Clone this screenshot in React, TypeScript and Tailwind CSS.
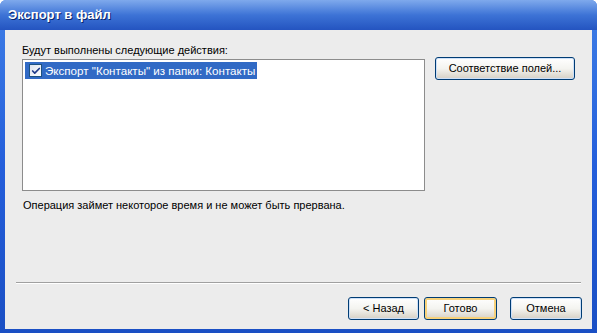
import { Check } from "lucide-react";

function XpButton({
  label,
  className = "",
  focused = false,
}: {
  label: string;
  className?: string;
  focused?: boolean;
}) {
  return (
    <button
      className={`flex h-[23px] items-center justify-center rounded-[3px] border border-[#003c74] bg-gradient-to-b from-white via-[#f4f4f0] to-[#d6d0c5] text-[11px] text-black ${
        focused ? "shadow-[inset_0_0_0_2px_#f7d27b]" : "shadow-[inset_0_0_0_1px_#cde0f8]"
      } ${className}`}
    >
      {label}
    </button>
  );
}

export default function App() {
  return (
    <div className="flex h-[333px] w-[599px] bg-white font-['Liberation_Sans',sans-serif]">
      <div className="flex w-[597px] flex-col rounded-t-[6px] bg-gradient-to-b from-[#3f7ee6] via-[#245edb] to-[#1a4fc4]">
        {/* title bar */}
        <div className="flex h-[30px] shrink-0 items-center rounded-t-[6px] bg-gradient-to-b from-[#7fa9ec] via-[#3d73d6] to-[#2454c0] pl-[8px]">
          <span className="text-[13px] font-bold text-white [text-shadow:1px_1px_0_#0a246a]">
            Экспорт в файл
          </span>
        </div>

        {/* body */}
        <div className="mx-[5px] mb-[4px] flex flex-1 flex-col bg-[#ececec] text-[11px] text-black">
          <div className="flex gap-[10px] pl-[17px] pt-[12px]">
            <div className="flex flex-col">
              <span className="leading-[16px]">Будут выполнены следующие действия:</span>
              <div className="mt-[1px] h-[132px] w-[403px] border border-[#8c8c8c] bg-white p-[2px]">
                <div className="flex h-[17px] w-fit items-center gap-[3px] bg-[#316ac5] pl-[4px] pr-[2px] text-[11.6px] text-white">
                  <div className="flex h-[13px] w-[13px] shrink-0 items-center justify-center border border-[#1c5180] bg-gradient-to-br from-[#dce2ee] to-white">
                    <Check className="h-[10px] w-[10px] text-[#1f3a8a]" strokeWidth={4} />
                  </div>
                  <span className="whitespace-nowrap">Экспорт "Контакты" из папки: Контакты</span>
                </div>
              </div>
            </div>
            <XpButton label="Соответствие полей..." className="mt-[15px] w-[140px]" />
          </div>

          <span className="mt-[6px] pl-[18px] leading-[16px]">
            Операция займет некоторое время и не может быть прервана.
          </span>

          <div className="mx-[11px] mt-auto border-t border-b border-t-[#a0a0a0] border-b-white" />

          <div className="flex justify-end gap-[5px] pb-[9px] pr-[10px] pt-[13px]">
            <XpButton label="< Назад" className="w-[71px]" />
            <XpButton label="Готово" className="w-[73px]" focused />
            <XpButton label="Отмена" className="ml-[8px] w-[72px]" />
          </div>
        </div>
      </div>
    </div>
  );
}
